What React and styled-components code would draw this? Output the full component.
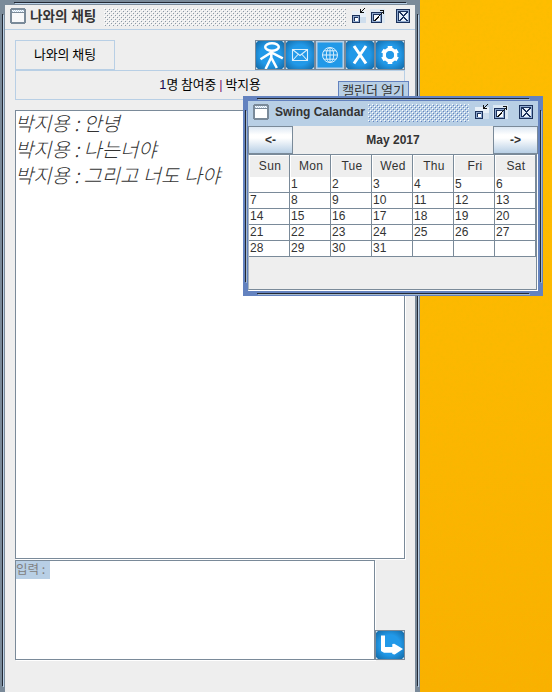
import React, { useId } from "react";
import styled, { createGlobalStyle, css } from "styled-components";

const Global = createGlobalStyle`
  * { box-sizing: border-box; }
  body { margin: 0; overflow: hidden; font-family: "Liberation Sans", "Noto Sans CJK KR", sans-serif; }
`;

const inactive = { frame: "#7a8a99", shine: "#b8cfe5", bar: "#eeeeee", bump: "#8c99a6", hi: "#ffffff" };
const active = { frame: "#6382bf", shine: "#a3b8cc", bar: "#b8cfe5", bump: "#6382bf", hi: "#ffffff" };

const Desktop = styled.main`
  position: relative;
  width: 552px;
  height: 692px;
  overflow: hidden;
  background: linear-gradient(#ffbd00, #fdb800 50%, #fab000);
`;

const Grain = styled.svg`
  position: absolute;
  inset: 0;
  width: 100%;
  height: 100%;
  opacity: 0.2;
`;

const Frame = styled.section`
  position: absolute;
  left: ${(p) => p.$x}px;
  top: ${(p) => p.$y}px;
  width: ${(p) => p.$w}px;
  height: ${(p) => p.$h}px;
  border: 5px solid ${(p) => p.$t.frame};
  background: #eeeeee;
  display: flex;
  flex-direction: column;
`;

const Groove = styled.i`
  position: absolute;
  background: #222833;
  ${(p) =>
    p.$side === "left" || p.$side === "right"
      ? css`
          width: 1px;
          top: 9px;
          bottom: 9px;
          ${p.$side}: -3px;
          box-shadow: 1px 1px 0 ${p.$t.shine};
        `
      : css`
          height: 1px;
          left: 9px;
          right: 9px;
          ${p.$side}: -3px;
          box-shadow: 1px 1px 0 ${p.$t.shine};
        `}
`;

const TitleBar = styled.header`
  height: 25px;
  flex: none;
  display: flex;
  align-items: flex-start;
  padding: 3px 4px 0 5px;
  background: ${(p) => p.$t.bar};
  border-bottom: 1px solid #b8cfe5;
`;

const TitleText = styled.h1`
  margin: 0 0 0 ${(p) => p.$gap}px;
  width: ${(p) => p.$w}px;
  flex: none;
  font: bold 12px/17px "Liberation Sans", "Noto Sans CJK KR", sans-serif;
  font-size: ${(p) => p.$size}px;
  color: #333333;
  white-space: nowrap;
`;

const BumpStrip = styled.svg`
  flex: 1;
  height: 18px;
  margin-right: 5px;
`;

const ControlGroup = styled.div`
  width: 60px;
  height: 16px;
  flex: none;
  display: grid;
  grid-template-columns: 19px 25px 16px;
`;

const Glyph = styled.svg`
  width: ${(p) => p.$w || 16}px;
  height: ${(p) => p.$h || 16}px;
  display: block;
  flex: none;
`;

const ChatBody = styled.div`
  padding: 10px;
  display: flex;
  flex-direction: column;
`;

const TopRow = styled.div`
  height: 30px;
  width: 390px;
  display: flex;
  justify-content: space-between;
`;

const Boxed = styled.div`
  width: ${(p) => p.$w}px;
  height: 30px;
  flex: none;
  border: 1px solid #b8cfe5;
  font: 13px/26px "Noto Sans CJK KR", sans-serif;
  font-size: ${(p) => p.$size}px;
  text-align: center;
  color: #000000;
`;

const Count = styled.span`
  color: #1a0a50;
  font-family: "Liberation Sans", sans-serif;
`;
const Divider = styled.span`
  color: #7a1a70;
  font-family: "Liberation Sans", sans-serif;
`;

const Tools = styled.nav`
  display: flex;
  width: 150px;
`;

const Tool = styled.button`
  width: 30px;
  height: 30px;
  padding: 0;
  flex: none;
  border: 1px solid #7a8a99;
  background: ${(p) => (p.$hover ? "#b8cfe5" : "#176ca6")};
  display: grid;
  place-items: center;
`;

const Log = styled.div`
  width: 390px;
  height: 449px;
  margin-top: 10px;
  border: 1px solid #7a8a99;
  box-shadow: 1px 1px 0 #ffffff;
  background: #ffffff;
`;

const Message = styled.p`
  margin: 0 0 0 -1px;
  height: 26px;
  font: italic 300 19.8px/23px "Noto Sans CJK KR", sans-serif;
  letter-spacing: 0.05px;
  color: #333333;
  white-space: pre;
`;

const InputRow = styled.div`
  display: flex;
  align-items: flex-end;
  margin-top: 1px;
`;

const InputArea = styled.div`
  width: 360px;
  height: 100px;
  border: 1px solid #7a8a99;
  box-shadow: 1px 1px 0 #ffffff;
  background: #ffffff;
`;

const Selected = styled.span`
  display: block;
  width: 34px;
  height: 18px;
  background: #b8cfe5;
  color: #808080;
  font: 12.5px/15px "Noto Sans CJK KR", sans-serif;
  white-space: pre;
`;

const Tooltip = styled.div`
  position: absolute;
  left: 338px;
  top: 81px;
  width: 71px;
  height: 19px;
  border: 1px solid #6382bf;
  background: #b8cfe5;
  color: #333333;
  text-align: center;
  font: 13px/16px "Noto Sans CJK KR", sans-serif;
  white-space: nowrap;
`;

const MonthRow = styled.div`
  height: 28px;
  flex: none;
  display: grid;
  grid-template-columns: 45px 1fr 45px;
`;

const StepButton = styled.button`
  border: 1px solid #7a8a99;
  padding: 0;
  background: linear-gradient(#dde8f3 0%, #ffffff 30%, #ffffff 42%, #b8cfe5 100%);
  font: bold 12px/14px "Liberation Sans", sans-serif;
  color: #333333;
`;

const MonthName = styled.h2`
  margin: 0;
  text-align: center;
  font: bold 12px/28px "Liberation Sans", sans-serif;
  color: #333333;
`;

const TablePane = styled.div`
  height: 136px;
  width: 289px;
  flex: none;
  border: 1px solid #7a8a99;
  border-left-color: #a9b5c0;
  box-shadow: 1px 1px 0 #ffffff;
`;

const WeekRow = styled.div`
  display: grid;
  grid-template-columns: repeat(7, 41px);
  height: ${(p) => (p.$head ? 22 : 16)}px;
`;

const HeadCell = styled.div`
  border-right: 1px solid #7a8a99;
  border-bottom: 1px solid #7a8a99;
  box-shadow: inset 1px 1px 0 #ffffff;
  font: 12px/22px "Liberation Sans", sans-serif;
  letter-spacing: 0.3px;
  text-align: center;
  padding-left: 2px;
  color: #333333;
`;

const DayCell = styled.div`
  border-right: 1px solid #7a8a99;
  border-bottom: 1px solid #7a8a99;
  background: #ffffff;
  font: 12px/15px "Liberation Sans", sans-serif;
  padding-left: 1px;
  color: #333333;
`;

function Bumps({ t }) {
  const id = useId();
  return (
    <BumpStrip shapeRendering="crispEdges">
      <pattern id={id} width="4" height="4" patternUnits="userSpaceOnUse">
        <path fill={t.hi} d="M0 0h1v1h-1zM2 2h1v1h-1z" />
        <path fill={t.bump} d="M1 1h1v1h-1zM3 3h1v1h-1z" />
      </pattern>
      <rect width="100%" height="100%" fill={`url(#${id})`} />
    </BumpStrip>
  );
}

function WindowIcon({ t }) {
  return (
    <Glyph viewBox="0 0 16 16" shapeRendering="crispEdges">
      <path fill="#7a8a99" d="M1 0h14v1h1v14h-1v1H1v-1H0V1h1z" />
      <path fill="#b8cfe5" d="M2 2h12v3H2z" />
      <path fill="#fff" d="M2 2h1v1H2zM4 2h1v1H4zM6 2h1v1H6zM8 2h1v1H8zM10 2h1v1h-1zM12 2h1v1h-1zM3 3h1v1H3zM5 3h1v1H5zM7 3h1v1H7zM9 3h1v1H9zM11 3h1v1h-1zM13 3h1v1h-1z" />
      <path fill="#7a8a99" d="M2 4h12v1H2z" />
      <path fill={t === active ? "#fff" : "#f7f8fa"} d="M2 5h12v9H2z" />
    </Glyph>
  );
}

function Controls() {
  return (
    <ControlGroup>
      <Glyph viewBox="0 0 16 16" shapeRendering="crispEdges">
        <path fill="#e8f0f8" d="M1 3h14v12H1z" />
        <path fill="#cfdeed" d="M9 9h6v6H9z" />
        <path fill="#1b315b" d="M1 7h8v8H1z" />
        <path fill="#8fa9cf" d="M2 8h6v6H2z" />
        <path fill="#1b315b" d="M3 9h4v4H3z" />
        <path fill="#fff" d="M4 10h3v3H4z" />
        <path fill="#111" d="M9 1h1v4H9zM10 4h3v1h-3zM10 3h1v1h-1zM11 2h1v1h-1zM12 1h1v1h-1zM13 0h1v1h-1z" />
      </Glyph>
      <Glyph viewBox="0 0 16 16" shapeRendering="crispEdges">
        <path fill="#dce8f3" d="M0 1h15v14H0z" />
        <path fill="#1b315b" d="M1 4h11v11H1z" />
        <path fill="#8fa9cf" d="M2 5h9v9H2z" />
        <path fill="#1b315b" d="M3 6h7v7H3z" />
        <path fill="#f4f8fc" d="M4 7h6v6H4z" />
        <path fill="#111" d="M4 12h1v-1h1v-1h1V9h1V8h1V7h1V6h1V5h1V4h1V3h1v1h-1v1h-1v1h-1v1h-1v1h-1v1H9v1H8v1H7v1H6v1H4zM10 2h4v4h-1V3h-3z" />
      </Glyph>
      <Glyph viewBox="0 0 16 16" shapeRendering="crispEdges">
        <path fill="#1b315b" d="M1 1h14v14H1z" />
        <path fill="#8fa9cf" d="M2 2h12v12H2z" />
        <path fill="#1b315b" d="M3 3h10v10H3z" />
        <path fill="#e8f0f8" d="M3.9 3.9h9v9h-9z" />
        <path fill="#1b315b" d="M4 4h2v1h1v1h1v1h1V6h1V5h1V4h2v1h-1v1h-1v1h-1v1h-1v1h1v1h1v1h1v1h1v1h-2v-1h-1v-1h-1v-1H8v1H7v1H6v1H4v-1h1v-1h1v-1h1V9h1V8H7V7H6V6H5V5H4z" />
      </Glyph>
    </ControlGroup>
  );
}

function Tile({ kind }) {
  const id = useId();
  return (
    <Glyph $w={28} $h={28} viewBox="0 0 28 28" fill="none" stroke="#fff">
      <radialGradient id={id} cx="50%" cy="50%" r="72%">
        <stop offset="0.5" stopColor="#2299e8" />
        <stop offset="1" stopColor="#13659f" />
      </radialGradient>
      <rect width="28" height="28" fill={kind === "globe" ? "#b8cfe5" : "#176ca6"} stroke="none" />
      <rect
        x={kind === "globe" ? 1.5 : 0}
        y={kind === "globe" ? 1.5 : 0}
        width={kind === "globe" ? 25 : 28}
        height={kind === "globe" ? 25 : 28}
        rx={kind === "globe" ? 0 : 3}
        fill={kind === "globe" ? "#2299e8" : `url(#${id})`}
        stroke="none"
      />
      {kind !== "globe" && <path fill="#cfe3f2" stroke="none" d="M0 0h2L0 2zM28 0v2l-2-2zM0 28v-2l2 2zM28 28h-2l2-2z" />}
      {kind === "person" && (
        <g strokeWidth="2.5">
          <ellipse cx="16" cy="6" rx="6.8" ry="3.7" />
          <path d="M15.3 10v8M4.5 18.3L15.3 11.5L26.8 17.3M9.6 28L15.2 16.5L20.8 27" />
        </g>
      )}
      {kind === "mail" && (
        <path stroke="#d9effc" strokeWidth="1.1" d="M6.5 8.5h15v11h-15zM6.5 8.5l7.5 6 7.5-6M6.5 19.5l5.5-6M21.5 19.5l-5.5-6" />
      )}
      {kind === "globe" && (
        <g stroke="#d9effc" strokeWidth="1">
          <circle cx="14" cy="14" r="7.5" />
          <ellipse cx="14" cy="14" rx="3.7" ry="7.5" />
          <path d="M14 6.5v15M6.5 14h15M8 9.8h12M8 18.2h12" />
        </g>
      )}
      {kind === "close" && <path strokeWidth="3" d="M8 5l12 17.5M20 5l-12 17.5" />}
      {kind === "gear" && (
        <g>
          <circle cx="14" cy="14" r="5.6" strokeWidth="3.6" />
          <path
            strokeWidth="4.6"
            strokeLinejoin="round"
            d="M14 5v3M14 20v3M6.4 9.6l2.5 1.5M19.1 16.9l2.5 1.5M6.4 18.4l2.5-1.5M19.1 11.1l2.5-1.5"
          />
          <circle cx="14" cy="14" r="4" fill="#2299e8" stroke="none" />
        </g>
      )}
      {kind === "send" && (
        <path fill="#fff" stroke="none" d="M5 4.5h4v11.5h7.3V13l2-.3L27 18l-8.3 5.5-2.4-.5v-1.2H8L5 20z" />
      )}
    </Glyph>
  );
}

function SwingWindow({ x, y, w, h, theme, title, titleGap, titleWidth, titleSize, bottomEdge, children }) {
  return (
    <Frame $x={x} $y={y} $w={w} $h={h} $t={theme}>
      <Groove $side="left" $t={theme} />
      <Groove $side="right" $t={theme} />
      <Groove $side="top" $t={theme} />
      {bottomEdge && <Groove $side="bottom" $t={theme} />}
      <TitleBar $t={theme}>
        <WindowIcon t={theme} />
        <TitleText $gap={titleGap} $w={titleWidth} $size={titleSize}>{title}</TitleText>
        <Bumps t={theme} />
        <Controls />
      </TitleBar>
      {children}
    </Frame>
  );
}

const days = ["Sun", "Mon", "Tue", "Wed", "Thu", "Fri", "Sat"];
const weeks = Array.from({ length: 5 }, (_, r) =>
  Array.from({ length: 7 }, (_, c) => {
    const n = r * 7 + c;
    return n > 0 && n < 32 ? n : "";
  })
);

export default function App() {
  return (
    <Desktop>
      <Global />
      <Grain>
        <filter id="grain">
          <feTurbulence type="fractalNoise" baseFrequency="0.3" numOctaves="2" />
          <feColorMatrix values="0 0 0 0 0.85  0 0 0 0 0.5  0 0 0 0 0  2.5 0 0 0 -0.9" />
        </filter>
        <rect width="100%" height="100%" filter="url(#grain)" />
      </Grain>
      <SwingWindow x={0} y={0} w={420} h={700} theme={inactive} title="나와의 채팅" titleGap={4} titleWidth={74} titleSize={13.6}>
        <ChatBody>
          <TopRow>
            <Boxed $w={100} $size={12.9}>나와의 채팅</Boxed>
            <Tools>
              {["person", "mail", "globe", "close", "gear"].map((k) => (
                <Tool key={k} $hover={k === "globe"} aria-label={k}>
                  <Tile kind={k} />
                </Tool>
              ))}
            </Tools>
          </TopRow>
          <Boxed $w={390} $size={12.8}>
            <Count>1</Count>명 참여중 <Divider>|</Divider> 박지용
          </Boxed>
          <Log>
            <Message>박지용 : 안녕</Message>
            <Message>박지용 : 나는너야</Message>
            <Message>박지용 : 그리고 너도 나야</Message>
          </Log>
          <InputRow>
            <InputArea>
              <Selected>입력 : </Selected>
            </InputArea>
            <Tool aria-label="send">
              <Tile kind="send" />
            </Tool>
          </InputRow>
        </ChatBody>
      </SwingWindow>
      <Tooltip>캘린더 열기</Tooltip>
      <SwingWindow x={243} y={96} w={300} h={200} theme={active} title="Swing Calandar" titleGap={6} titleWidth={93} titleSize={12} bottomEdge>
        <MonthRow>
          <StepButton>&lt;-</StepButton>
          <MonthName>May 2017</MonthName>
          <StepButton>-&gt;</StepButton>
        </MonthRow>
        <TablePane>
          <WeekRow $head>
            {days.map((d) => (
              <HeadCell key={d}>{d}</HeadCell>
            ))}
          </WeekRow>
          {weeks.map((week, i) => (
            <WeekRow key={i}>
              {week.map((n, j) => (
                <DayCell key={j}>{n}</DayCell>
              ))}
            </WeekRow>
          ))}
        </TablePane>
      </SwingWindow>
    </Desktop>
  );
}
